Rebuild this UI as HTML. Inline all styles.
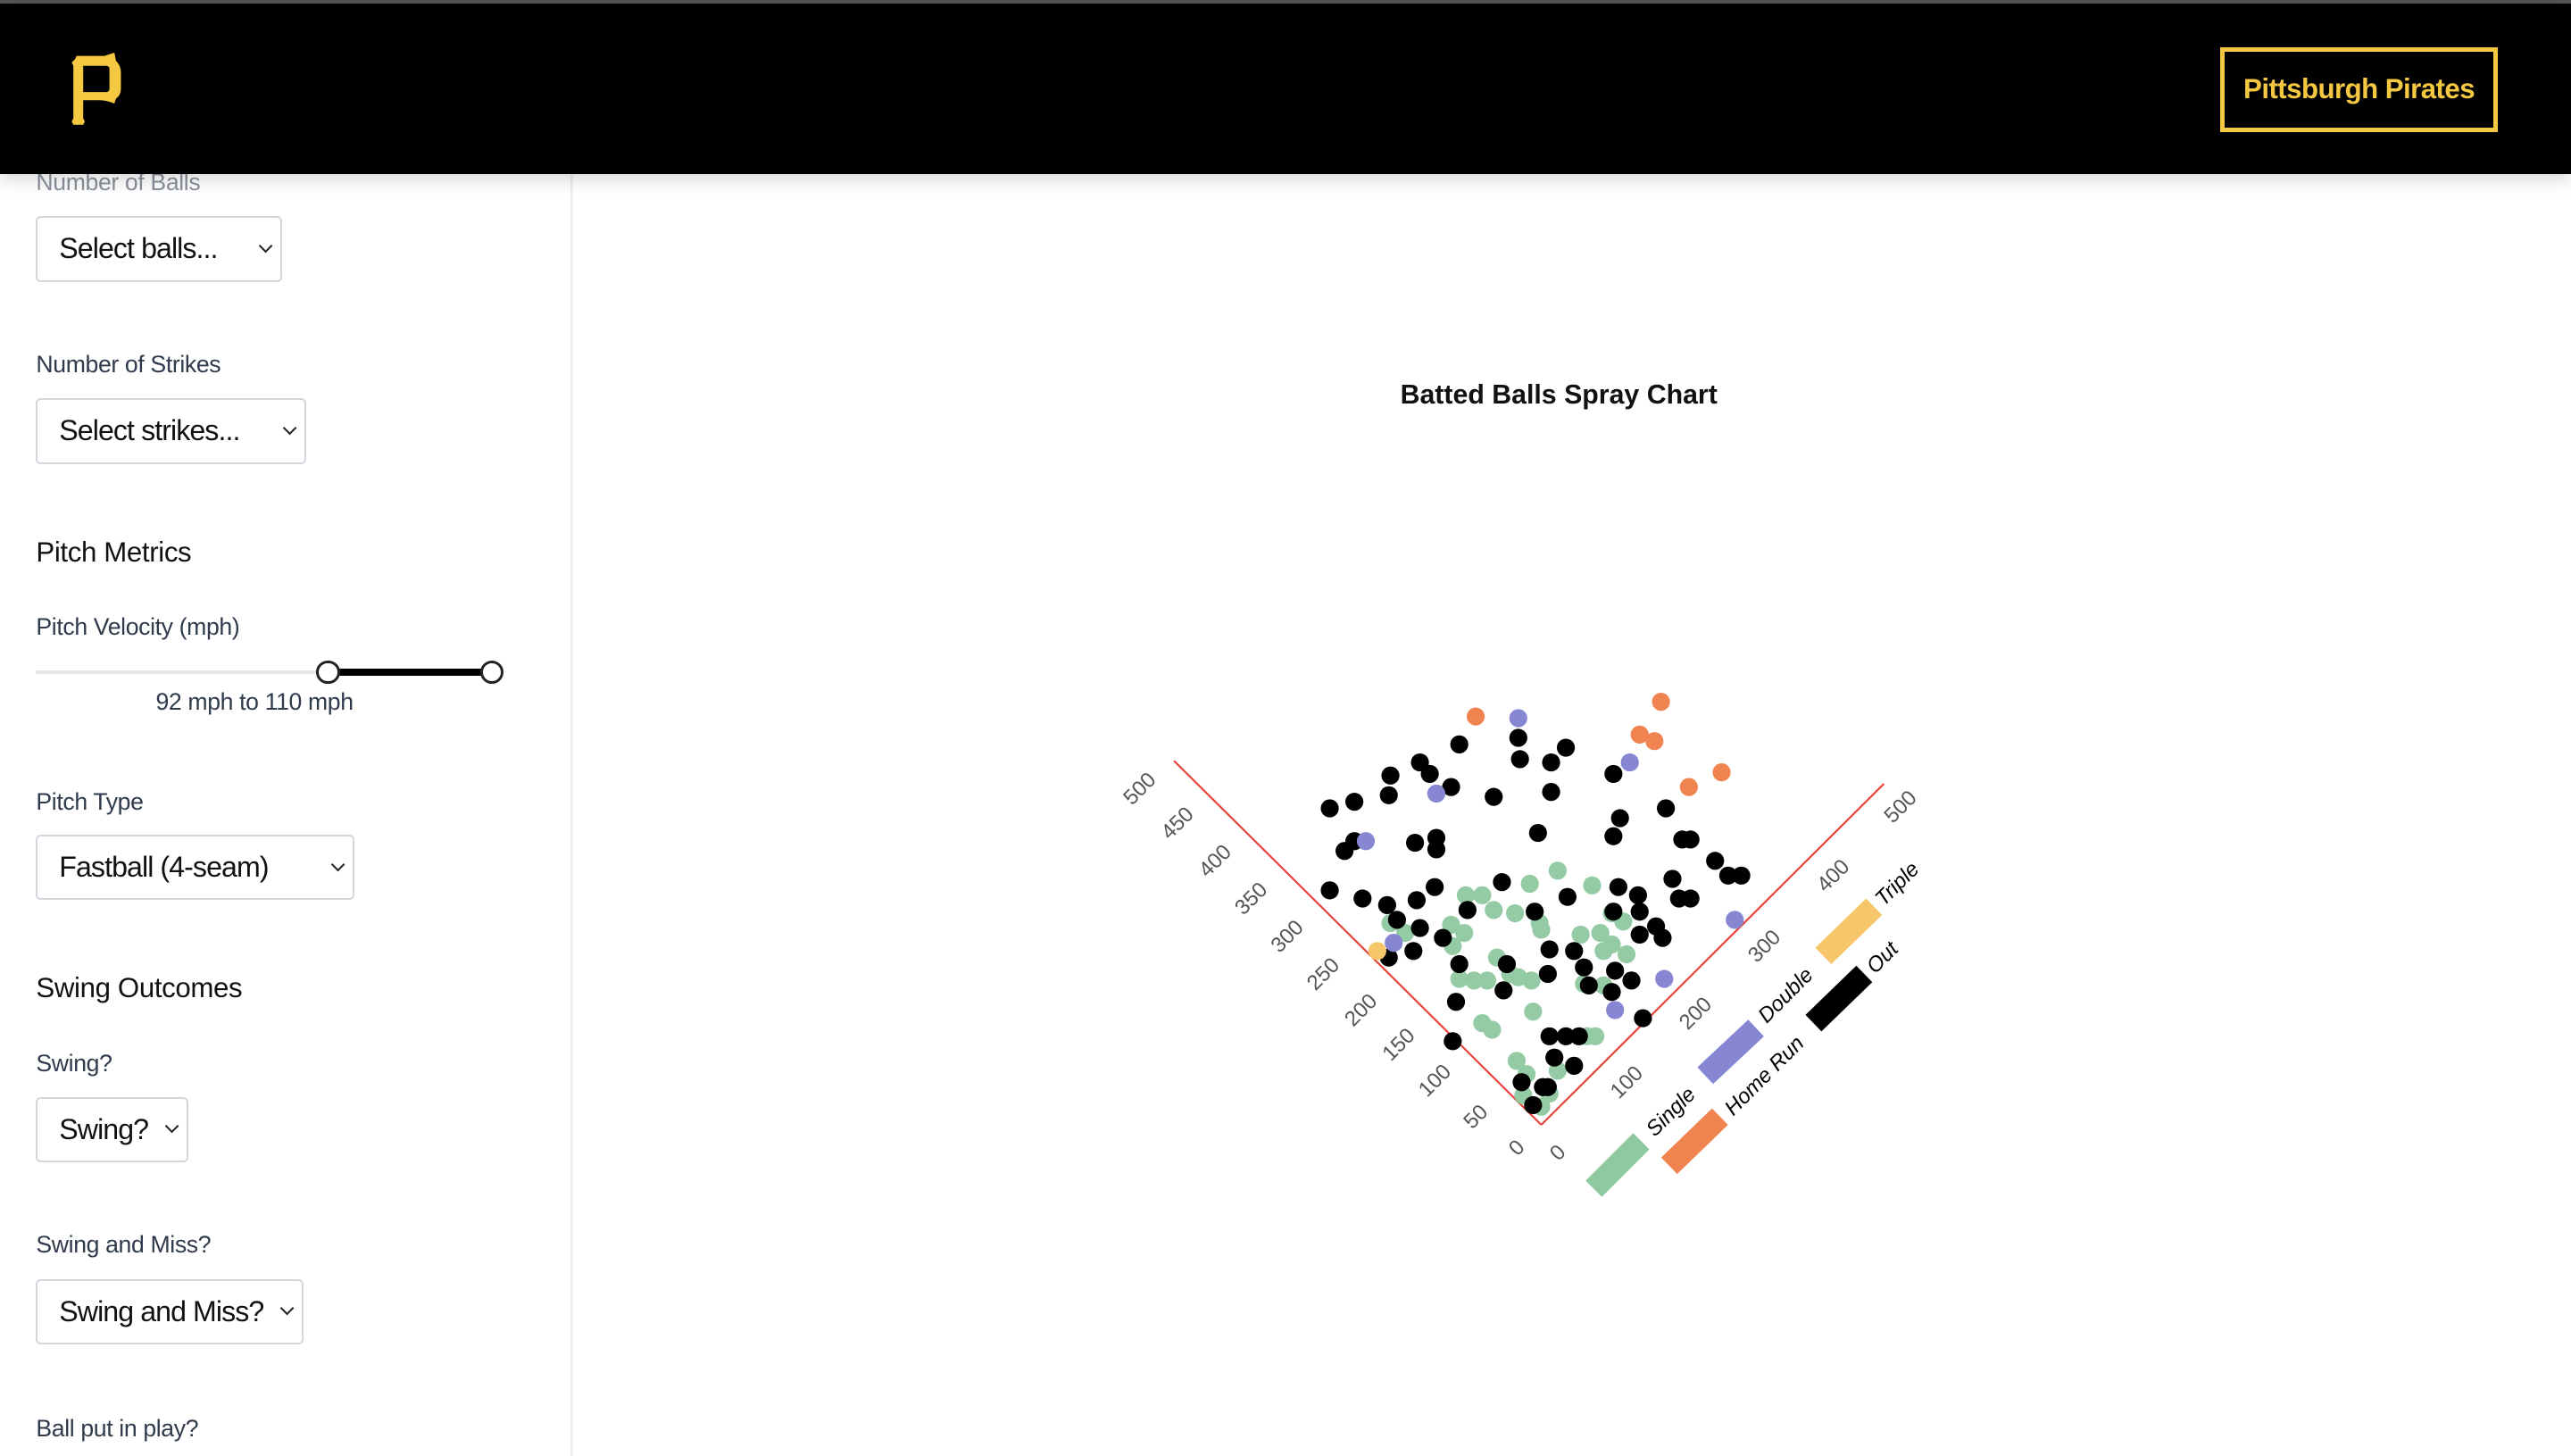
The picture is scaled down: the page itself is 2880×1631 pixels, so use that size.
<!DOCTYPE html>
<html><head><meta charset="utf-8"><style>
html,body{margin:0;padding:0;}
body{width:1568px;height:887.5px;overflow:hidden;zoom:1.83673;background:#fff;font-family:"Liberation Sans",sans-serif;position:relative;}
.top{position:absolute;left:0;top:0;width:1568px;height:2px;background:#555;}
.hdr{position:absolute;left:0;top:2px;width:1568px;height:104px;background:#000;z-index:5;box-shadow:0 4px 10px rgba(0,0,0,.15);}
.btn{position:absolute;left:1354px;top:27px;width:164px;height:46px;border:3px solid #f5c842;color:#f5c842;font-weight:bold;font-size:17px;letter-spacing:-0.3px;line-height:46px;text-align:center;}
.side{position:absolute;left:0;top:106px;width:348px;height:782px;background:#fff;border-right:2px solid #eef0f3;}
.lab{position:absolute;left:22px;font-size:14.5px;color:#2f3a4c;letter-spacing:-0.2px;}
.h{position:absolute;left:22px;font-size:17px;color:#111;letter-spacing:-0.2px;}
.sel{position:absolute;left:22px;height:40px;border:1.5px solid #d3d6dc;border-radius:3px;box-sizing:border-box;font-size:17.5px;letter-spacing:-0.5px;color:#111;line-height:38px;padding-left:13px;}
.sel:after{content:"";position:absolute;right:6px;top:14px;width:5px;height:5px;border-right:1.3px solid #222;border-bottom:1.3px solid #222;transform:rotate(45deg);}
</style></head><body>
<div class="top"></div>
<div class="hdr">
<svg style="position:absolute;left:40px;top:30px" width="40" height="46" viewBox="0 0 40 46">
<path d="M6 4 L7 2 H24 L30 0 L31 5 Q34 8 34 12 V22 Q34 26 31 28 L30 31 Q25 29 21 29 H11 V40 L12 42 L11 44 H5 L4 42 L5 40 V8 L4 6 Z M11 8 V24 H25 Q27 24 27 22 V10 Q27 8 25 8 Z" fill="#f5c842" fill-rule="evenodd"/></svg>
<div class="btn">Pittsburgh Pirates</div>
</div>
<div class="side">
<div class="lab" style="top:-3px;color:#8a919c">Number of Balls</div>
<div class="sel" style="top:26px;width:150px">Select balls...</div>
<div class="lab" style="top:108px">Number of Strikes</div>
<div class="sel" style="top:137px;width:165px">Select strikes...</div>
<div class="h" style="top:221px">Pitch Metrics</div>
<div class="lab" style="top:268px">Pitch Velocity (mph)</div>
<div style="position:absolute;left:22px;top:303px;width:280px;height:2px;background:#e4e6ea"></div>
<div style="position:absolute;left:200px;top:302px;width:100px;height:4px;background:#000"></div>
<div style="position:absolute;left:193px;top:297px;width:11px;height:11px;border:2px solid #222;border-radius:50%;background:#fff"></div>
<div style="position:absolute;left:293px;top:297px;width:11px;height:11px;border:2px solid #222;border-radius:50%;background:#fff"></div>
<div class="lab" style="top:314px;left:95px">92 mph to 110 mph</div>
<div class="lab" style="top:375px">Pitch Type</div>
<div class="sel" style="top:403px;width:194px">Fastball (4-seam)</div>
<div class="h" style="top:487px">Swing Outcomes</div>
<div class="lab" style="top:534px">Swing?</div>
<div class="sel" style="top:563px;width:93px">Swing?</div>
<div class="lab" style="top:645px">Swing and Miss?</div>
<div class="sel" style="top:674px;width:163px">Swing and Miss?</div>
<div class="lab" style="top:757px">Ball put in play?</div>
</div>
<div style="position:absolute;left:854px;top:232px;font-size:16.5px;font-weight:bold;color:#111">Batted Balls Spray Chart</div>
<svg style="position:absolute;left:0;top:0" width="1568" height="887" viewBox="0 0 1568 887">
<g stroke="#e8453c" stroke-width="1.2"><line x1="940" y1="686" x2="716" y2="464"/><line x1="940" y1="686" x2="1149" y2="478"/></g>
<g fill="#555" font-size="13" font-family="Liberation Sans, sans-serif" text-anchor="middle">
<text transform="translate(928,703) rotate(-45)">0</text><text transform="translate(903,684) rotate(-45)">50</text><text transform="translate(878,662) rotate(-45)">100</text><text transform="translate(856,640) rotate(-45)">150</text><text transform="translate(833,619) rotate(-45)">200</text><text transform="translate(810,597) rotate(-45)">250</text><text transform="translate(788,574) rotate(-45)">300</text><text transform="translate(766,551) rotate(-45)">350</text><text transform="translate(744,528) rotate(-45)">400</text><text transform="translate(721,505) rotate(-45)">450</text><text transform="translate(698,484) rotate(-45)">500</text>
<text transform="translate(953,706) rotate(-45)">0</text><text transform="translate(995,663) rotate(-45)">100</text><text transform="translate(1037,621) rotate(-45)">200</text><text transform="translate(1079,580) rotate(-45)">300</text><text transform="translate(1121,537) rotate(-45)">400</text><text transform="translate(1162,495) rotate(-45)">500</text>
</g>
<g stroke-width="14"><line x1="972" y1="725" x2="1001" y2="696" stroke="#8fc9a0"/><line x1="1018" y1="711" x2="1049" y2="681" stroke="#ef8451"/><line x1="1040" y1="656" x2="1071" y2="627" stroke="#8686d3"/><line x1="1106" y1="624" x2="1137" y2="594" stroke="#000"/><line x1="1112" y1="583" x2="1143" y2="553" stroke="#f6c76a"/></g>
<g font-size="13" font-family="Liberation Sans, sans-serif" text-anchor="middle" fill="#000" font-style="italic">
<text transform="translate(1022,681) rotate(-45)">Single</text><text transform="translate(1079,659) rotate(-45)">Home Run</text><text transform="translate(1092,610) rotate(-45)">Double</text><text transform="translate(1151,587) rotate(-45)">Out</text><text transform="translate(1160,542) rotate(-45)">Triple</text></g>
<g fill="#8fc9a0" opacity="0.95">
<circle cx="950" cy="531" r="5.5"/><circle cx="933" cy="539" r="5.5"/><circle cx="971" cy="540" r="5.5"/><circle cx="894" cy="546" r="5.5"/><circle cx="904" cy="546" r="5.5"/><circle cx="911" cy="555" r="5.5"/><circle cx="924" cy="557" r="5.5"/><circle cx="939" cy="563" r="5.5"/><circle cx="940" cy="567" r="5.5"/><circle cx="885" cy="564" r="5.5"/><circle cx="893" cy="569" r="5.5"/><circle cx="848" cy="563" r="5.5"/><circle cx="857" cy="569" r="5.5"/><circle cx="886" cy="577" r="5.5"/><circle cx="964" cy="570" r="5.5"/><circle cx="976" cy="569" r="5.5"/><circle cx="983" cy="557" r="5.5"/><circle cx="990" cy="562" r="5.5"/><circle cx="983" cy="576" r="5.5"/><circle cx="992" cy="582" r="5.5"/><circle cx="978" cy="580" r="5.5"/><circle cx="913" cy="584" r="5.5"/><circle cx="899" cy="598" r="5.5"/><circle cx="890" cy="597" r="5.5"/><circle cx="907" cy="598" r="5.5"/><circle cx="926" cy="596" r="5.5"/><circle cx="934" cy="598" r="5.5"/><circle cx="978" cy="601" r="5.5"/><circle cx="966" cy="600" r="5.5"/><circle cx="921" cy="594" r="5.5"/><circle cx="904" cy="624" r="5.5"/><circle cx="910" cy="628" r="5.5"/><circle cx="925" cy="647" r="5.5"/><circle cx="968" cy="632" r="5.5"/><circle cx="973" cy="632" r="5.5"/><circle cx="935" cy="617" r="5.5"/><circle cx="931" cy="655" r="5.5"/><circle cx="950" cy="653" r="5.5"/><circle cx="940" cy="675" r="5.5"/><circle cx="929" cy="668" r="5.5"/><circle cx="945" cy="667" r="5.5"/></g>
<g fill="#000">
<circle cx="890" cy="454" r="5.5"/><circle cx="926" cy="450" r="5.5"/><circle cx="955" cy="456" r="5.5"/><circle cx="866" cy="465" r="5.5"/><circle cx="848" cy="473" r="5.5"/><circle cx="872" cy="472" r="5.5"/><circle cx="927" cy="463" r="5.5"/><circle cx="946" cy="465" r="5.5"/><circle cx="984" cy="472" r="5.5"/><circle cx="885" cy="480" r="5.5"/><circle cx="847" cy="485" r="5.5"/><circle cx="826" cy="489" r="5.5"/><circle cx="811" cy="493" r="5.5"/><circle cx="911" cy="486" r="5.5"/><circle cx="946" cy="483" r="5.5"/><circle cx="1016" cy="493" r="5.5"/><circle cx="988" cy="499" r="5.5"/><circle cx="938" cy="508" r="5.5"/><circle cx="863" cy="514" r="5.5"/><circle cx="876" cy="511" r="5.5"/><circle cx="876" cy="518" r="5.5"/><circle cx="984" cy="510" r="5.5"/><circle cx="1026" cy="512" r="5.5"/><circle cx="1031" cy="512" r="5.5"/><circle cx="820" cy="519" r="5.5"/><circle cx="826" cy="513" r="5.5"/><circle cx="1046" cy="525" r="5.5"/><circle cx="1054" cy="534" r="5.5"/><circle cx="1062" cy="534" r="5.5"/><circle cx="811" cy="543" r="5.5"/><circle cx="831" cy="548" r="5.5"/><circle cx="846" cy="552" r="5.5"/><circle cx="864" cy="549" r="5.5"/><circle cx="875" cy="541" r="5.5"/><circle cx="895" cy="555" r="5.5"/><circle cx="916" cy="538" r="5.5"/><circle cx="936" cy="556" r="5.5"/><circle cx="956" cy="547" r="5.5"/><circle cx="987" cy="541" r="5.5"/><circle cx="999" cy="546" r="5.5"/><circle cx="1020" cy="536" r="5.5"/><circle cx="1024" cy="548" r="5.5"/><circle cx="1031" cy="548" r="5.5"/><circle cx="852" cy="561" r="5.5"/><circle cx="866" cy="566" r="5.5"/><circle cx="880" cy="572" r="5.5"/><circle cx="984" cy="556" r="5.5"/><circle cx="1000" cy="556" r="5.5"/><circle cx="1010" cy="565" r="5.5"/><circle cx="1000" cy="570" r="5.5"/><circle cx="1014" cy="572" r="5.5"/><circle cx="960" cy="580" r="5.5"/><circle cx="945" cy="579" r="5.5"/><circle cx="847" cy="584" r="5.5"/><circle cx="862" cy="580" r="5.5"/><circle cx="890" cy="588" r="5.5"/><circle cx="919" cy="588" r="5.5"/><circle cx="944" cy="594" r="5.5"/><circle cx="966" cy="590" r="5.5"/><circle cx="985" cy="592" r="5.5"/><circle cx="969" cy="601" r="5.5"/><circle cx="995" cy="598" r="5.5"/><circle cx="917" cy="604" r="5.5"/><circle cx="888" cy="611" r="5.5"/><circle cx="983" cy="605" r="5.5"/><circle cx="1002" cy="621" r="5.5"/><circle cx="886" cy="635" r="5.5"/><circle cx="945" cy="632" r="5.5"/><circle cx="955" cy="632" r="5.5"/><circle cx="963" cy="632" r="5.5"/><circle cx="948" cy="645" r="5.5"/><circle cx="960" cy="650" r="5.5"/><circle cx="941" cy="663" r="5.5"/><circle cx="928" cy="660" r="5.5"/><circle cx="944" cy="663" r="5.5"/><circle cx="935" cy="674" r="5.5"/></g>
<g fill="#ef8451"><circle cx="900" cy="437" r="5.5"/><circle cx="1013" cy="428" r="5.5"/><circle cx="1000" cy="448" r="5.5"/><circle cx="1009" cy="452" r="5.5"/><circle cx="1050" cy="471" r="5.5"/><circle cx="1030" cy="480" r="5.5"/></g>
<g fill="#8686d3"><circle cx="926" cy="438" r="5.5"/><circle cx="994" cy="465" r="5.5"/><circle cx="876" cy="484" r="5.5"/><circle cx="833" cy="513" r="5.5"/><circle cx="850" cy="575" r="5.5"/><circle cx="1058" cy="561" r="5.5"/><circle cx="1015" cy="597" r="5.5"/><circle cx="985" cy="616" r="5.5"/></g>
<circle cx="840" cy="580" r="5.5" fill="#f6c76a"/>
</svg>
</body></html>
